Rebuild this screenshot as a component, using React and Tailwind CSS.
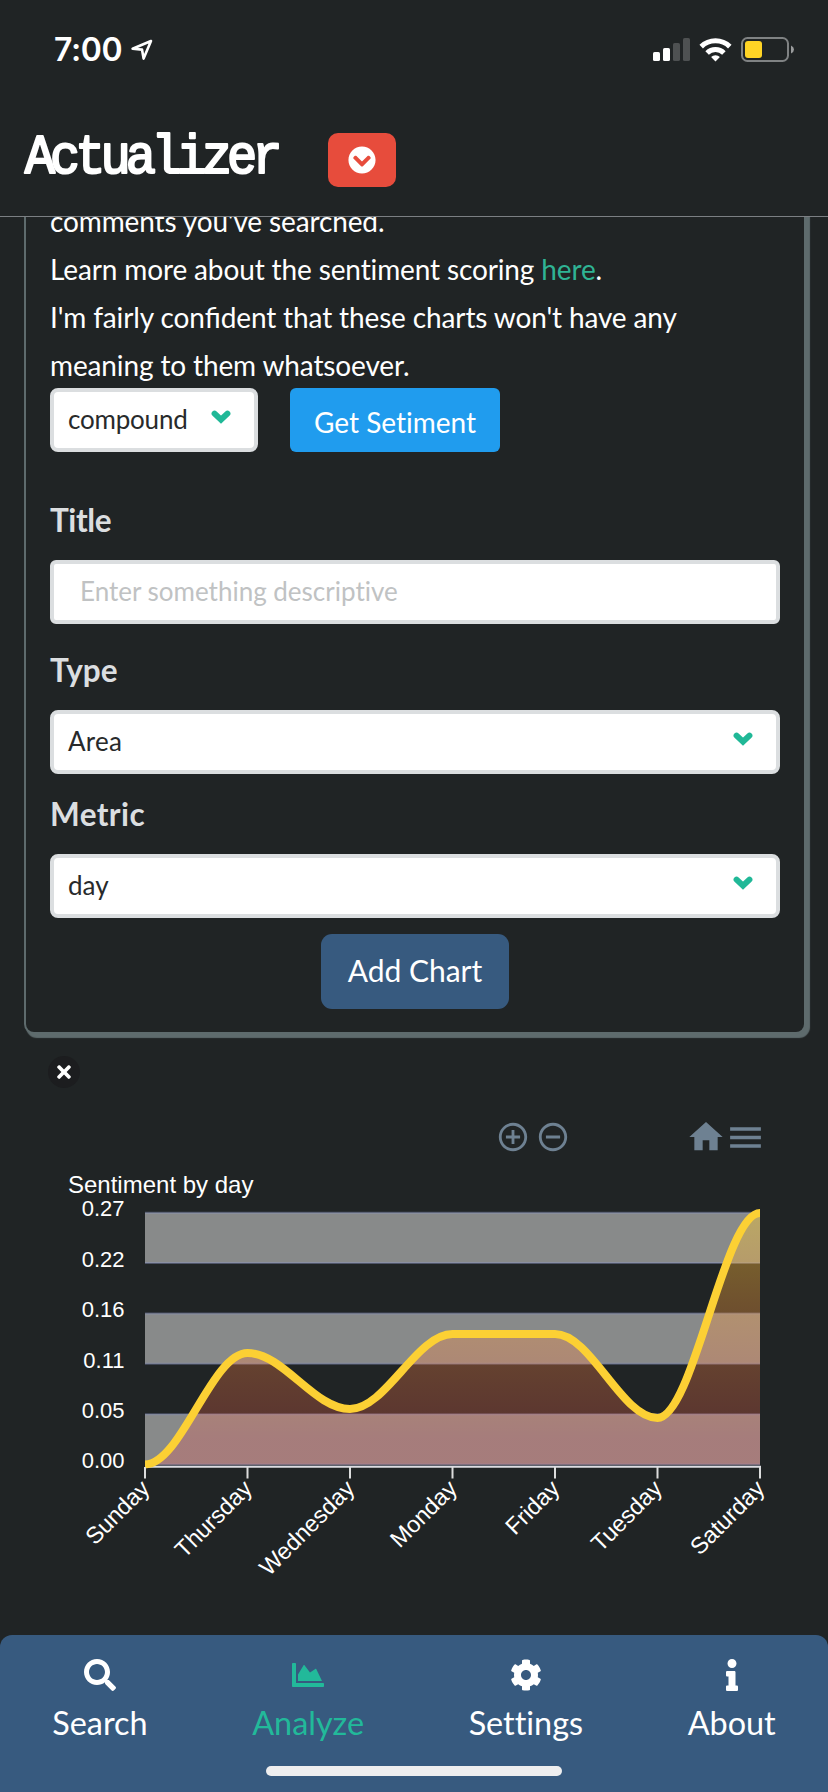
import { FaSearch, FaChartArea, FaCog, FaInfo, FaChevronCircleDown, FaTimes } from "react-icons/fa";

const points = [
  { day: "Sunday", y: 1464.5 },
  { day: "Thursday", y: 1353 },
  { day: "Wednesday", y: 1409 },
  { day: "Monday", y: 1334 },
  { day: "Friday", y: 1334 },
  { day: "Tuesday", y: 1418 },
  { day: "Saturday", y: 1213 },
].map((p, i) => ({ ...p, x: 145 + i * 102.5, y: p.y - 1160 }));

const line = points.reduce((d, p, i) => {
  if (i === 0) return `M${p.x} ${p.y}`;
  const q = points[i - 1];
  const c = (p.x - q.x) * 0.35;
  return `${d} C${q.x + c} ${q.y} ${p.x - c} ${p.y} ${p.x} ${p.y}`;
}, "");

const levels = ["0.27", "0.22", "0.16", "0.11", "0.05", "0.00"];
const gridY = (i) => 52.7 + i * 50.36;

function StatusBar() {
  return (
    <div className="flex h-[99px] items-center justify-between pl-[54px] pr-[33px]">
      <div className="flex items-center">
        <span className="mt-px font-[Inter,sans-serif] text-[32px] leading-none font-semibold tracking-[-0.4px]">7:00</span>
        <svg className="ml-[8px] mt-px" width="24" height="24" viewBox="0 0 24 24" fill="none" stroke="white" strokeWidth="2.6" strokeLinejoin="round">
          <path d="M21 3 L2.6 10.8 L12 11.6 L13.6 20.6 Z" />
        </svg>
      </div>
      <div className="flex items-center">
        <svg width="37" height="23" viewBox="0 0 37 23" fill="white">
          <rect x="0" y="14" width="7" height="9" rx="1.6" />
          <rect x="10" y="10" width="7" height="13" rx="1.6" />
          <rect x="20" y="5" width="7" height="18" rx="1.6" fill="#4e5152" />
          <rect x="30" y="0" width="7" height="23" rx="1.6" fill="#4e5152" />
        </svg>
        <svg className="ml-[9px]" width="33" height="24" viewBox="0 0 33 24" fill="none" stroke="white" strokeWidth="5">
          <path d="M2.2 8.6 A20.5 20.5 0 0 1 30.8 8.6" />
          <path d="M8.1 15 A12 12 0 0 1 24.9 15" />
          <path d="M12.1 19 A6.3 6.3 0 0 1 20.9 19 L16.5 23.6 Z" fill="white" stroke="none" />
        </svg>
        <svg className="ml-[9px]" width="54" height="25" viewBox="0 0 54 25">
          <rect x="1" y="1" width="46" height="23" rx="5.5" fill="none" stroke="#7f8283" strokeWidth="2" />
          <rect x="4" y="4" width="17" height="17" rx="3" fill="#ffd425" />
          <path d="M50 8.5 Q53 10 53 12.5 Q53 15 50 16.5 Z" fill="#9a9c9d" />
        </svg>
      </div>
    </div>
  );
}

function Chevron() {
  return (
    <svg width="20" height="15" viewBox="0 0 20 15" fill="none" stroke="#20b897" strokeWidth="6" strokeLinecap="round">
      <path d="M3.6 4.6 L10 10.6 L16.4 4.6" />
    </svg>
  );
}

function Select({ value, className }) {
  return (
    <div className={`flex h-16 items-start justify-between rounded-lg border-4 border-[#dbdee0] bg-white pl-[14px] ${className}`}>
      <span className="mt-[9px] text-[26px] leading-[36px] text-[#282a2b]">{value}</span>
      <span className="mt-[17px]"><Chevron /></span>
    </div>
  );
}

function Label({ children, className }) {
  return <div className={`text-[31.5px] leading-[36px] font-bold text-[#dbdee0] ${className}`}>{children}</div>;
}

function Chart() {
  return (
    <svg className="block" width="828" height="440" viewBox="0 0 828 440" fontFamily="'Liberation Sans', Arial, sans-serif">
      <defs>
        <linearGradient id="area" x1="0" y1="0" x2="0" y2="1">
          <stop offset="0" stopColor="#fdd033" stopOpacity="0.43" />
          <stop offset="0.8" stopColor="#ff6b4d" stopOpacity="0.27" />
          <stop offset="0.9" stopColor="#ff5450" stopOpacity="0.25" />
          <stop offset="1" stopColor="#ff5450" stopOpacity="0.25" />
        </linearGradient>
        <clipPath id="plot"><rect x="144.5" y="40" width="616" height="270" /></clipPath>
      </defs>
      <text x="68" y="32.5" fontSize="24" fill="white">Sentiment by day</text>
      {[0, 2, 4].map((i) => (
        <rect key={i} x="145" y={gridY(i)} width="615" height="50.36" fill="#888a8a" />
      ))}
      {levels.map((l, i) => (
        <g key={l}>
          <line x1="145" x2="760" y1={gridY(i)} y2={gridY(i)} stroke="#8f98c8" strokeOpacity="0.4" strokeWidth="2" />
          <text x="124.5" y={56.3 + i * 50.4} fontSize="22" fill="white" textAnchor="end">{l}</text>
        </g>
      ))}
      <path d={`${line} L760 304.5 L145 304.5 Z`} fill="url(#area)" />
      <line x1="145" x2="761" y1="306.8" y2="306.8" stroke="#dcdce2" strokeWidth="2" />
      <path d={line} fill="none" stroke="#fcd034" strokeWidth="8" clipPath="url(#plot)" />
      {points.map((p) => (
        <g key={p.day}>
          <line x1={p.x} x2={p.x} y1="307" y2="318.5" stroke="#dcdddd" strokeWidth="2" />
          <text x={p.x + 6} y="330" fontSize="23.4" fill="white" textAnchor="end" transform={`rotate(-45 ${p.x + 6} 330)`}>{p.day}</text>
        </g>
      ))}
    </svg>
  );
}

const tabs = [
  { name: "Search", Icon: FaSearch },
  { name: "Analyze", Icon: FaChartArea, active: true },
  { name: "Settings", Icon: FaCog },
  { name: "About", Icon: FaInfo },
];

export default function App() {
  return (
    <div className="flex h-[1792px] w-[828px] flex-col overflow-hidden bg-[#202425] font-[Lato,sans-serif] text-white [font-variant-ligatures:no-common-ligatures]">
      <header className="h-[217px] shrink-0 border-b border-[#7b7f83]">
        <StatusBar />
        <div className="flex items-start pl-[22px] pt-[26px]">
          <svg className="overflow-visible" width="262" height="64" viewBox="0 0 262 64">
            <text
              x="3" y="48.5" fontFamily="'Liberation Mono', monospace" fontSize="56" fill="white"
              stroke="white" strokeWidth="2.2" strokeLinejoin="round" letterSpacing="-5.5" transform="scale(0.9 1)"
            >
              Actualizer
            </text>
          </svg>
          <button className="ml-[44px] mt-[8px] flex h-[54px] w-[68px] items-center justify-center rounded-[10px] bg-[#e74c3c]">
            <FaChevronCircleDown size={28} />
          </button>
        </div>
      </header>

      <main className="flex min-h-0 flex-1 flex-col overflow-hidden">
        <section className="-mt-5 mr-6 ml-[26px] h-[835px] shrink-0 rounded-lg bg-[#202425] px-6 shadow-[0_0_0_2px_#5e6b6d,3px_3px_1px_3px_#5e6b6d]">
          <p className="text-[28px] leading-[48px] tracking-[-0.13px]">
            comments you've searched.<br />
            Learn more about the sentiment scoring <a className="text-[#2fb394]">here</a>.<br />
            I'm fairly con<span className="tracking-normal [font-variant-ligatures:normal]">fi</span>dent that these charts won't have any<br />
            meaning to them whatsoever.
          </p>
          <div className="-mt-px flex">
            <Select value="compound" className="w-52 pr-[23px] tracking-[-0.2px]" />
            <button className="ml-8 h-16 w-[210px] rounded-md bg-[#209cee] pt-[3px] text-[28px]">Get Setiment</button>
          </div>
          <Label className="mt-[50px] tracking-[-0.4px]">Title</Label>
          <div className="mt-[22px] flex h-16 items-center rounded-md border-4 border-[#dbdee0] bg-white pl-[26px] text-[26px] text-[#c0c2c3]">
            <span className="-mt-0.5">Enter something descriptive</span>
          </div>
          <Label className="mt-[28px]">Type</Label>
          <Select value="Area" className="mt-[22px] pr-[23px] tracking-[0.3px]" />
          <Label className="mt-[22px] tracking-[0.4px]">Metric</Label>
          <Select value="day" className="mt-[22px] pr-[23px]" />
          <div className="mt-4 flex justify-center">
            <button className="h-[75px] w-[188px] rounded-[11px] bg-[#375a7f] pb-0.5 text-[30px]">Add Chart</button>
          </div>
        </section>

        <div className="mt-6 flex flex-col">
          <button className="ml-12 flex size-8 items-center justify-center rounded-full bg-[#1c1d1f]">
            <FaTimes size={20} />
          </button>
          <div className="mt-[29px] flex h-10 items-center pl-[496px] text-[#6e8192]">
            <svg width="34" height="34" viewBox="0 0 24 24" fill="currentColor">
              <path d="M13 7h-2v4H7v2h4v4h2v-4h4v-2h-4V7zm-1-5C6.49 2 2 6.49 2 12s4.49 10 10 10 10-4.49 10-10S17.51 2 12 2zm0 18c-4.41 0-8-3.59-8-8s3.59-8 8-8 8 3.59 8 8-3.59 8-8 8z" />
            </svg>
            <svg className="ml-[6px]" width="34" height="34" viewBox="0 0 24 24" fill="currentColor">
              <path d="M7 11v2h10v-2H7zm5-9C6.48 2 2 6.48 2 12s4.48 10 10 10 10-4.48 10-10S17.52 2 12 2zm0 18c-4.41 0-8-3.59-8-8s3.59-8 8-8 8 3.59 8 8-3.59 8-8 8z" />
            </svg>
            <svg className="ml-[116px]" width="40" height="40" viewBox="0 0 24 24" fill="currentColor">
              <path d="M10 20v-6h4v6h5v-8h3L12 3 2 12h3v8z" />
            </svg>
            <svg className="ml-[-1px] mt-[1px]" width="41" height="41" viewBox="0 0 24 24" fill="currentColor">
              <path d="M3 18h18v-2H3v2zm0-5h18v-2H3v2zm0-7v2h18V6H3z" />
            </svg>
          </div>
          <div className="mt-[3px]"><Chart /></div>
        </div>
      </main>

      <nav className="flex h-[157px] shrink-0 flex-col items-center rounded-t-xl bg-[#375a7f]">
        <div className="flex w-full justify-around pt-6">
          {tabs.map(({ name, Icon, active }) => (
            <a key={name} className={`flex flex-col items-center ${active ? "text-[#22b99a]" : "text-white"}`}>
              <Icon size={32} />
              <span className="mt-[12px] mb-px text-[32.4px] leading-[40px]">{name}</span>
            </a>
          ))}
        </div>
        <div className="mt-[22px] h-[10px] w-[296px] rounded-full bg-[#eeeeef]" />
      </nav>
    </div>
  );
}
